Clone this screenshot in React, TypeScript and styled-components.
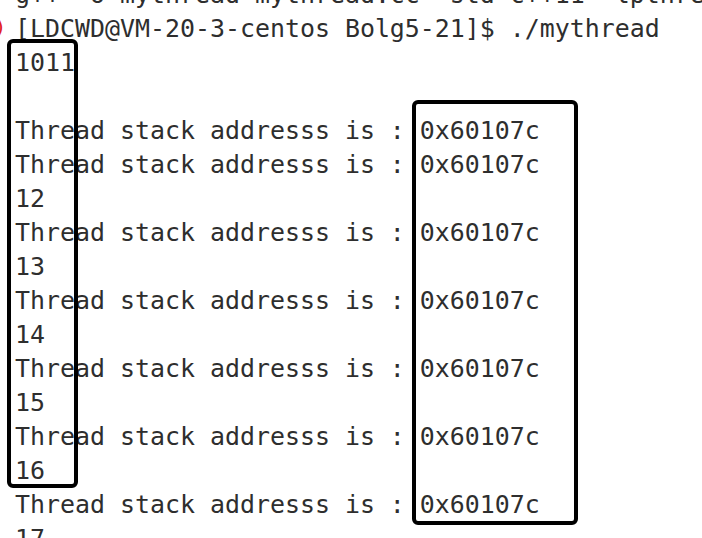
import React from "react";
import styled, { createGlobalStyle } from "styled-components";

const Global = createGlobalStyle`
  html, body { margin: 0; padding: 0; background: #ffffff; }
  body { width: 702px; height: 538px; overflow: hidden; }
`;

const Screen = styled.div`
  position: relative;
  width: 702px;
  height: 538px;
  overflow: hidden;
  background: #ffffff;
`;

const Output = styled.div`
  display: flex;
  flex-direction: column;
  margin-top: -22px;
  padding-left: 15px;
  font-family: "DejaVu Sans Mono", "Liberation Mono", monospace;
  font-size: 24.92px;
  color: #2e2e2e;
`;

const Line = styled.div`
  height: 34px;
  line-height: 34px;
  white-space: pre;
`;

const Mark = styled.span`
  position: absolute;
  left: -4px;
  top: 15px;
  font-family: "DejaVu Sans", sans-serif;
  font-size: 20px;
  line-height: 24px;
  color: #e02020;
`;

const Frame = styled.div<{ $l: number; $t: number; $w: number; $h: number }>`
  position: absolute;
  left: ${(p) => p.$l}px;
  top: ${(p) => p.$t}px;
  width: ${(p) => p.$w}px;
  height: ${(p) => p.$h}px;
  box-sizing: border-box;
  border: 4px solid #000000;
  border-radius: 6px;
`;

const lines = [
  "g++ -o mythread mythread.cc -std=c++11 -lpthread",
  "[LDCWD@VM-20-3-centos Bolg5-21]$ ./mythread",
  "1011",
  "",
  "Thread stack addresss is : 0x60107c",
  "Thread stack addresss is : 0x60107c",
  "12",
  "Thread stack addresss is : 0x60107c",
  "13",
  "Thread stack addresss is : 0x60107c",
  "14",
  "Thread stack addresss is : 0x60107c",
  "15",
  "Thread stack addresss is : 0x60107c",
  "16",
  "Thread stack addresss is : 0x60107c",
  "17",
];

export default function App() {
  return (
    <Screen>
      <Global />
      <Output>
        {lines.map((t, i) => (
          <Line key={i}>{t}</Line>
        ))}
      </Output>
      <Mark>)</Mark>
      <Frame $l={7} $t={39} $w={71} $h={449} />
      <Frame $l={412} $t={100} $w={166} $h={425} />
    </Screen>
  );
}
